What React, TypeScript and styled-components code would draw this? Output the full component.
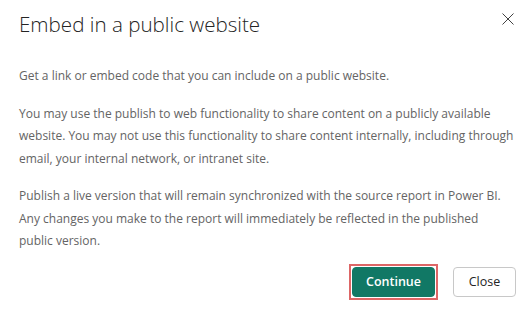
import React from "react";
import styled, { createGlobalStyle } from "styled-components";

const GlobalStyle = createGlobalStyle`
  html, body {
    margin: 0;
    background: #fff;
  }
  body {
    font-family: "Open Sans", "Noto Sans", sans-serif;
    -webkit-font-smoothing: antialiased;
  }
`;

const Dialog = styled.div`
  width: 532px;
  height: 309px;
  box-sizing: border-box;
  padding: 10px 16px 0 19px;
  display: flex;
  flex-direction: column;
  background: #fff;
`;

const Header = styled.div`
  display: flex;
  align-items: flex-start;
  justify-content: space-between;
`;

const Title = styled.h1`
  margin: 0;
  font-size: 20.6px;
  font-weight: 300;
  line-height: 28px;
  color: #242424;
`;

const CloseIconButton = styled.button`
  width: 14px;
  height: 14px;
  margin: 2px 1px 0 0;
  padding: 0;
  border: none;
  background: transparent;
  color: #424242;
  display: flex;
  align-items: center;
  justify-content: center;
  cursor: pointer;
`;

const Body = styled.div`
  margin-top: 27px;
  display: flex;
  flex-direction: column;
  gap: 15px;
`;

const Paragraph = styled.p`
  margin: 0;
  font-size: 12px;
  line-height: 22.5px;
  color: #646464;
  white-space: nowrap;
`;

const Footer = styled.div`
  margin-top: 11px;
  display: flex;
  justify-content: flex-end;
  align-items: center;
  gap: 15px;
`;

const FocusRing = styled.span`
  display: inline-flex;
  padding: 1px;
  border: 2px solid #dd6666;
`;

const Button = styled.button<{ $primary?: boolean }>`
  height: 30px;
  box-sizing: border-box;
  border-radius: 4px;
  font-family: inherit;
  font-size: 12.5px;
  font-weight: ${(p) => (p.$primary ? 600 : 400)};
  padding: 0;
  width: ${(p) => (p.$primary ? 83 : 63)}px;
  background: ${(p) => (p.$primary ? "#117865" : "#fff")};
  color: ${(p) => (p.$primary ? "#fff" : "#242424")};
  border: 1px solid ${(p) => (p.$primary ? "#117865" : "#c8c8c8")};
  cursor: pointer;
`;

const DismissIcon = () => (
  <svg width="12" height="12" viewBox="0 0 12 12" fill="none">
    <path d="M0.5 0.5L11.5 11.5M11.5 0.5L0.5 11.5" stroke="currentColor" strokeWidth="1" />
  </svg>
);

export default function App() {
  return (
    <>
      <GlobalStyle />
      <Dialog>
        <Header>
          <Title>Embed in a public website</Title>
          <CloseIconButton aria-label="Close">
            <DismissIcon />
          </CloseIconButton>
        </Header>
        <Body>
          <Paragraph>Get a link or embed code that you can include on a public website.</Paragraph>
          <Paragraph>
            You may use the publish to web functionality to share content on a publicly available
            <br />
            website. You may not use this functionality to share content internally, including through
            <br />
            email, your internal network, or intranet site.
          </Paragraph>
          <Paragraph>
            Publish a live version that will remain synchronized with the source report in Power BI.
            <br />
            Any changes you make to the report will immediately be reflected in the published
            <br />
            public version.
          </Paragraph>
        </Body>
        <Footer>
          <FocusRing>
            <Button $primary>Continue</Button>
          </FocusRing>
          <Button>Close</Button>
        </Footer>
      </Dialog>
    </>
  );
}
